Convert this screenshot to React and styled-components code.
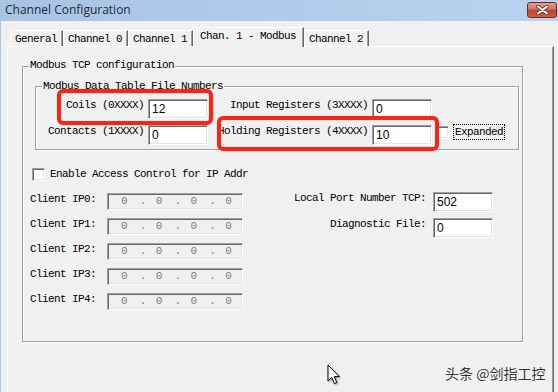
import React from "react";
import styled, { createGlobalStyle } from "styled-components";

const mono = `"Liberation Mono", "DejaVu Sans Mono", monospace`;

const GlobalStyle = createGlobalStyle`
  html, body {
    margin: 0;
    padding: 0;
    background: #f0f0f0;
  }
  #root {
    width: 558px;
    height: 392px;
    overflow: hidden;
  }
`;

const Window = styled.div`
  position: relative;
  width: 558px;
  height: 392px;
  display: flex;
  flex-direction: column;
  background: #f0f0f0;
  overflow: hidden;
`;

const TitleBar = styled.div`
  height: 21px;
  flex: none;
  display: flex;
  justify-content: space-between;
  align-items: flex-start;
  background: linear-gradient(to right, #a8c3e4, #b9d3ef);
`;

const Title = styled.span`
  padding-left: 5px;
  font: 12px/20px "Open Sans", "Noto Sans", sans-serif;
  color: #1c2a3c;
`;

const CloseButton = styled.div`
  width: 30px;
  height: 16px;
  margin: 2px 1px 0 0;
  box-sizing: border-box;
  border: 1px solid #6a2a22;
  border-radius: 3px;
  background: linear-gradient(#e7a08e 0%, #d3705c 45%, #c0412d 52%, #cf5d42 100%);
  display: flex;
  align-items: center;
  justify-content: center;
`;

const Client = styled.div`
  flex: 1;
  display: flex;
  flex-direction: column;
  padding: 6px 4px 0 6px;
  border-left: 1px solid #a9c6e8;
`;

const TabStrip = styled.div`
  height: 19px;
  flex: none;
  display: flex;
  align-items: flex-end;
  padding-left: 3px;
  position: relative;
  z-index: 1;
`;

const Tab = styled.div`
  height: ${(p) => (p.$active ? 20 : 16)}px;
  margin-bottom: ${(p) => (p.$active ? -1 : 0)}px;
  padding: ${(p) => (p.$active ? "0 7px 3px 6px" : "0 5px 0 4px")};
  box-sizing: border-box;
  display: flex;
  align-items: center;
  background: #f0f0f0;
  border-top: 1px solid #fff;
  border-left: 1px solid #fff;
  border-right: 1px solid #696969;
  box-shadow: inset -1px 0 0 #a0a0a0;
  font: 11px/14px ${mono};
  letter-spacing: -0.6px;
  color: #000;
  white-space: nowrap;
`;

const TabPanel = styled.div`
  height: 360px;
  flex: none;
  box-sizing: border-box;
  padding: 19px 0 0 14px;
  border-top: 1px solid #fff;
  border-left: 1px solid #fff;
  border-right: 1px solid #696969;
  box-shadow: inset -1px 0 0 #a0a0a0;
`;

const Group = styled.div`
  position: relative;
  box-sizing: border-box;
  width: ${(p) => p.$w}px;
  height: ${(p) => p.$h}px;
  margin: ${(p) => p.$m || 0};
  border: 1px solid #a0a0a0;
  box-shadow: 1px 1px 0 #fff, inset 1px 1px 0 #fff;
`;

const Legend = styled.span`
  position: absolute;
  top: ${(p) => p.$top}px;
  left: 6px;
  padding: 0 1px;
  background: #f0f0f0;
  font: 11px/13px ${mono};
  letter-spacing: -0.6px;
  white-space: nowrap;
`;

const TableGrid = styled.div`
  display: grid;
  grid-template-columns: 108px 60px 156px 60px auto;
  grid-auto-rows: 20px;
  column-gap: 4px;
  row-gap: 6px;
  padding-top: 12px;
`;

const Label = styled.span`
  align-self: start;
  text-align: ${(p) => (p.$left ? "left" : "right")};
  font: 11px/13px ${mono};
  letter-spacing: -0.6px;
  white-space: nowrap;
  color: #000;
`;

const Field = styled.div`
  box-sizing: border-box;
  width: ${(p) => p.$w || 60}px;
  height: ${(p) => p.$h || 20}px;
  padding-left: 3px;
  background: ${(p) => (p.$disabled ? "#f0f0f0" : "#fff")};
  border-top: 1px solid #a0a0a0;
  border-left: 1px solid #a0a0a0;
  border-right: 1px solid #fff;
  border-bottom: 1px solid #fff;
  box-shadow: inset 1px 1px 0 #696969, inset -1px -1px 0 #e3e3e3;
  font: 12px/19px "Liberation Sans", Arial, sans-serif;
  color: #000;
`;

const CheckBox = styled.div`
  box-sizing: border-box;
  width: 13px;
  height: 13px;
  flex: none;
  margin-top: ${(p) => p.$mt || 0}px;
  background: #fff;
  border-top: 1px solid #a0a0a0;
  border-left: 1px solid #a0a0a0;
  border-right: 1px solid #fff;
  border-bottom: 1px solid #fff;
  box-shadow: inset 1px 1px 0 #696969, inset -1px -1px 0 #e3e3e3;
`;

const OptionCell = styled.div`
  display: flex;
  align-items: flex-start;
  gap: 4px;
`;

const Focused = styled.span`
  margin-top: -1px;
  height: 16px;
  box-sizing: border-box;
  padding: 0 1px;
  border: 1px dotted #000;
  font-family: ${mono};
  font-size: 11px;
  line-height: 14px;
  letter-spacing: -0.6px;
  white-space: nowrap;
`;

const Marker = styled.div`
  position: absolute;
  left: ${(p) => p.$x}px;
  top: ${(p) => p.$y}px;
  width: ${(p) => p.$w}px;
  height: ${(p) => p.$h}px;
  box-sizing: border-box;
  border: 4px solid #ff2215;
  border-radius: 6px;
  z-index: 3;
  pointer-events: none;
`;

const CheckRow = styled.div`
  display: flex;
  align-items: center;
  gap: 5px;
  margin: 18px 0 0 9px;
`;

const CheckLabel = styled.span`
  white-space: nowrap;
  font: 11px/13px ${mono};
  letter-spacing: -0.6px;
`;

const IpSection = styled.div`
  display: flex;
  align-items: flex-start;
  margin: 11px 0 0 7px;
`;

const IpList = styled.div`
  display: grid;
  grid-template-columns: 77px 136px;
  grid-auto-rows: 17px;
  row-gap: 8px;
  padding-top: 1px;
`;

const PortList = styled.div`
  display: grid;
  grid-template-columns: 176px 60px;
  grid-auto-rows: 20px;
  column-gap: 7px;
  row-gap: 6px;
  margin-left: 7px;
`;

const IpBox = styled(Field)`
  display: flex;
  padding-left: 3px;
  font: 11px/15px ${mono};
  color: #7c7c7c;
`;

const Octet = styled.span`
  width: 28px;
  text-align: center;
`;

const Dot = styled.span`
  width: 6px;
  padding-left: 2px;
  text-align: center;
`;

const Watermark = styled.div`
  position: absolute;
  left: 445px;
  top: 363px;
  font: 14px/20px "Noto Sans CJK SC", "Noto Sans", sans-serif;
  color: #333;
  text-shadow: 0 0 2px #fff;
  white-space: nowrap;
`;

const Cursor = styled.svg`
  position: absolute;
  left: 327px;
  top: 364px;
  filter: drop-shadow(1px 1px 1px rgba(0, 0, 0, 0.35));
`;

const tabs = ["General", "Channel 0", "Channel 1", "Chan. 1 - Modbus", "Channel 2"];
const clients = ["Client IP0:", "Client IP1:", "Client IP2:", "Client IP3:", "Client IP4:"];

const IpAddress = () => (
  <IpBox $w={136} $h={17} $disabled>
    <Octet>0</Octet>
    <Dot>.</Dot>
    <Octet>0</Octet>
    <Dot>.</Dot>
    <Octet>0</Octet>
    <Dot>.</Dot>
    <Octet>0</Octet>
  </IpBox>
);

const App = () => {
  return (
    <Window>
      <GlobalStyle />
      <TitleBar>
        <Title>Channel Configuration</Title>
        <CloseButton>
          <svg width="13" height="10" viewBox="0 0 13 10">
            <path d="M2 1.5 L11 8.5 M11 1.5 L2 8.5" stroke="#6b3a33" strokeWidth="3.6" strokeLinecap="round" />
            <path d="M2 1.5 L11 8.5 M11 1.5 L2 8.5" stroke="#fff" strokeWidth="2" strokeLinecap="round" />
          </svg>
        </CloseButton>
      </TitleBar>
      <Client>
        <TabStrip>
          {tabs.map((t, i) => (
            <Tab key={t} $active={i === 3}>
              {t}
            </Tab>
          ))}
        </TabStrip>
        <TabPanel>
          <Group $w={501} $h={276}>
            <Legend $top={-8}>Modbus TCP configuration</Legend>
            <Group $w={484} $h={64} $m="19px 0 0 12px">
              <Legend $top={-7}>Modbus Data Table File Numbers</Legend>
              <TableGrid>
                <Label>Coils (0XXXX)</Label>
                <Field>12</Field>
                <Label>Input Registers (3XXXX)</Label>
                <Field>0</Field>
                <span />
                <Label>Contacts (1XXXX)</Label>
                <Field>0</Field>
                <Label>Holding Registers (4XXXX)</Label>
                <Field>10</Field>
                <OptionCell>
                  <CheckBox $mt={1} />
                  <Focused>Expanded</Focused>
                </OptionCell>
              </TableGrid>
              <Marker $x={21} $y={2} $w={156} $h={36} />
              <Marker $x={181} $y={29} $w={222} $h={35} />
            </Group>
            <CheckRow>
              <CheckBox />
              <CheckLabel>Enable Access Control for IP Addr</CheckLabel>
            </CheckRow>
            <IpSection>
              <IpList>
                {clients.map((c) => (
                  <React.Fragment key={c}>
                    <Label $left>{c}</Label>
                    <IpAddress />
                  </React.Fragment>
                ))}
              </IpList>
              <PortList>
                <Label>Local Port Number TCP:</Label>
                <Field>502</Field>
                <Label>Diagnostic File:</Label>
                <Field>0</Field>
              </PortList>
            </IpSection>
          </Group>
        </TabPanel>
      </Client>
      <Watermark>头条 @剑指工控</Watermark>
      <Cursor width="14" height="22" viewBox="0 0 14 22">
        <path
          d="M1 1 L1 17 L4.8 13.4 L7.4 19.6 L9.8 18.6 L7.3 12.6 L12.4 12.6 Z"
          fill="#fff"
          stroke="#000"
          strokeWidth="1"
          strokeLinejoin="miter"
        />
      </Cursor>
    </Window>
  );
};

export default App;
